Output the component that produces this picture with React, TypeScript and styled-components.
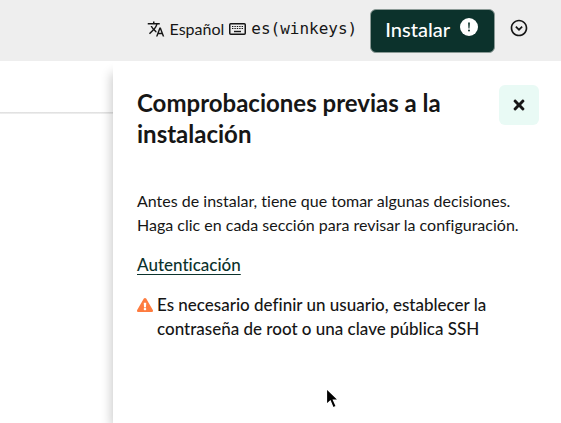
import React from "react";
import styled, { createGlobalStyle } from "styled-components";
import { MdTranslate, MdOutlineExpandCircleDown } from "react-icons/md";
import { FaExclamationTriangle, FaTimes } from "react-icons/fa";

const GlobalStyle = createGlobalStyle`
  *, *::before, *::after { box-sizing: border-box; }
  body {
    margin: 0;
    background: #fff;
    color: #161616;
    font: 16px/24px Lato, "Noto Sans", sans-serif;
    font-variant-ligatures: none;
  }
  button { font: inherit; color: inherit; cursor: pointer; }
  h2, p { margin: 0; padding: 0; }
`;

const Page = styled.div`
  min-height: 100vh;
  display: flex;
  flex-direction: column;
`;

const Masthead = styled.header`
  min-height: 61px;
  padding: 0 32px 0 8px;
  display: flex;
  align-items: center;
  justify-content: flex-end;
  background: #eee;
`;

const LocaleButton = styled.button`
  display: flex;
  align-items: center;
  gap: 5px;
  border: 0;
  padding: 0 13px 4px 0;
  background: none;
  white-space: nowrap;
`;

const Keymap = styled.span`
  font-family: "DejaVu Sans Mono", "Liberation Mono", monospace;
`;

const InstallButton = styled.button`
  display: flex;
  align-items: center;
  gap: 10px;
  height: 44px;
  padding: 0 16px 4px 14px;
  border: 1px solid #8b9a96;
  border-radius: 6px;
  background: #0c322c;
  color: #fff;
  font-size: 20px;
  font-weight: 500;
`;

const AlertBadge = styled.svg`
  margin-bottom: 4px;
`;

const OptionsButton = styled.button`
  display: flex;
  border: 0;
  margin-left: 14px;
  padding: 0 0 6px;
  background: none;
`;

const Body = styled.div`
  flex: 1;
  display: grid;
  grid-template-columns: 1fr min(448px, 80%);
`;

const Main = styled.main`
  padding-top: 51px;
`;

const Divider = styled.div`
  height: 2px;
  background: linear-gradient(#dcdcdc, #f2f2f2);
`;

const Drawer = styled.aside`
  padding: 24px 22px 24px 24px;
  background: #fff;
  box-shadow: -6px 8px 10px -4px rgba(0, 0, 0, 0.2);
  clip-path: inset(0 0 0 -24px);
`;

const DrawerHead = styled.div`
  display: flex;
  align-items: flex-start;
  justify-content: space-between;
  gap: 16px;
  margin-bottom: 40px;
`;

const Title = styled.h2`
  font-size: 24px;
  line-height: 31px;
  font-weight: 700;
  padding-top: 2px;
`;

const CloseButton = styled.button`
  flex: none;
  display: grid;
  place-items: center;
  width: 40px;
  height: 40px;
  border: 0;
  border-radius: 6px;
  background: #e9faf5;
`;

const Sections = styled.div`
  display: flex;
  flex-direction: column;
  align-items: flex-start;
  gap: 16px;
`;

const SectionLink = styled.a`
  color: #0c322c;
  font-size: 17px;
  font-weight: 500;
  text-decoration: underline;
  text-underline-offset: 3px;
`;

const Issue = styled.p`
  display: flex;
  gap: 4px;
  font-size: 17px;
  font-weight: 500;
  svg { flex: none; margin-top: 4px; color: #fe7c3f; }
`;

const Pointer = styled.svg`
  position: absolute;
  left: 325px;
  top: 387px;
  pointer-events: none;
`;

const KeyboardIcon = () => (
  <svg width="17" height="12" viewBox="0 0 17 12" fill="none" stroke="currentColor" aria-hidden="true">
    <rect x="0.75" y="0.75" width="15.5" height="10.5" rx="1" strokeWidth="1.5" />
    <path d="M3 3.5h11M3 5.5h11" strokeWidth="1.2" strokeDasharray="1.4 1" />
    <path d="M5 8.5h7" strokeWidth="1.4" />
  </svg>
);

export default function App() {
  return (
    <Page>
      <GlobalStyle />
      <Masthead>
        <LocaleButton aria-label="Español, es(winkeys)">
          <MdTranslate size={18} />
          <span>Español</span>
          <KeyboardIcon />
          <Keymap>es(winkeys)</Keymap>
        </LocaleButton>
        <InstallButton>
          Instalar
          <AlertBadge width="18" height="18" viewBox="0 0 18 18" aria-hidden="true">
            <circle cx="9" cy="9" r="9" fill="#fff" />
            <path d="M8.1 4.5h1.8l-.4 6h-1z" fill="#0c322c" />
            <circle cx="9" cy="12.5" r="1" fill="#0c322c" />
          </AlertBadge>
        </InstallButton>
        <OptionsButton aria-label="Opciones">
          <MdOutlineExpandCircleDown size={20} />
        </OptionsButton>
      </Masthead>
      <Body>
        <Main>
          <Divider />
        </Main>
        <Drawer>
          <DrawerHead>
            <Title>Comprobaciones previas a la instalación</Title>
            <CloseButton aria-label="Cerrar">
              <FaTimes size={16} />
            </CloseButton>
          </DrawerHead>
          <Sections>
            <p>
              Antes de instalar, tiene que tomar algunas decisiones. Haga clic en cada sección para
              revisar la configuración.
            </p>
            <SectionLink href="#autenticacion">Autenticación</SectionLink>
            <Issue>
              <FaExclamationTriangle size={16} />
              <span>
                Es necesario definir un usuario, establecer la contraseña de root o una clave
                pública SSH
              </span>
            </Issue>
          </Sections>
        </Drawer>
      </Body>
      <Pointer width="16" height="24" viewBox="0 0 16 24" aria-hidden="true">
        <path
          d="M1.5 1.5v16l3.8-3.4 2.8 6.6 3.1-1.4-2.8-6.3h5z"
          fill="#000"
          stroke="#fff"
          strokeWidth="1.2"
        />
      </Pointer>
    </Page>
  );
}
